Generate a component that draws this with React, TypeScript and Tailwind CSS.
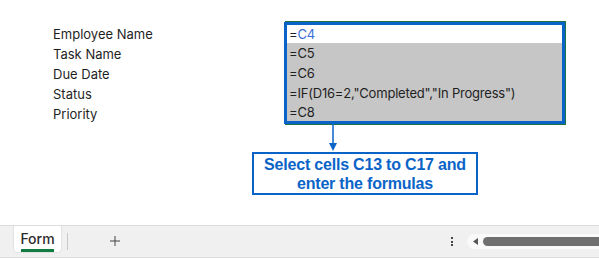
import React from 'react';

const labels = ["Employee Name", "Task Name", "Due Date", "Status", "Priority"];
const formulas = ["=C5", "=C6", '=IF(D16=2,"Completed","In Progress")', "=C8"];

const App = () => {
    return (
        <div className="w-[599px] h-[259px] bg-white flex flex-col overflow-hidden text-[#1f1f1f]"
             style={{fontFamily: "Inter, 'Liberation Sans', sans-serif"}}>
            {/*sheet area*/}
            <div className="h-[225px] flex flex-col">
                <div className="flex">
                    <div className="w-[284px] pl-[53px] pt-[24px] text-[13px]">
                        {labels.map((label) => (
                            <div key={label} className="h-[20px] leading-[20px]">{label}</div>
                        ))}
                    </div>
                    <div className="mt-[22px] w-[281px] border-[3px] border-[#0a64c8] shadow-[1px_-1px_0_#217346,1px_1px_0_#217346] text-[13px] tracking-[-0.2px]">
                        <div className="h-[18px] leading-[18px] bg-white pl-[2px]">
                            =<span className="text-[#3a6fd6]">C4</span>
                        </div>
                        {formulas.map((f, index) => (
                            <div key={index}
                                 className={`${index === 3 ? "h-[18px] leading-[18px]" : "h-[20px] leading-[20px]"} bg-[#c6c6c6] pl-[2px]`}>
                                {f}
                            </div>
                        ))}
                    </div>
                </div>
                {/*arrow*/}
                <svg width="10" height="28" className="ml-[328px]" viewBox="0 0 10 28">
                    <line x1="5" y1="0" x2="5" y2="21" stroke="#0a64c8" strokeWidth="1.5"/>
                    <path d="M1 19 L9 19 L5 27 Z" fill="#0a64c8"/>
                </svg>
                {/*callout*/}
                <div className="ml-[252px] w-[226px] h-[43px] border-2 border-[#0a64c8] flex flex-col items-center justify-center text-[#0a64c8] font-bold text-[16px] leading-[19px] tracking-[-0.2px]"
                     style={{fontFamily: "'Liberation Sans', Arial, sans-serif"}}>
                    <div>Select cells C13 to C17 and</div>
                    <div>enter the formulas</div>
                </div>
            </div>
            {/*sheet tabs bar*/}
            <div className="h-[33px] bg-[#f0f0f0] border-t border-b border-[#dcdcdc] flex items-start relative">
                <div className="ml-[13px] w-[49px] h-[27px] bg-white rounded-b-[5px] border-x border-b border-[#e2e2e2] flex flex-col items-center pt-[4px]">
                    <span className="text-[14px] leading-[18px] font-medium text-[#2b2b2b]">Form</span>
                    <div className="w-[33px] h-[2.5px] bg-[#107c41] mt-[1px]"/>
                </div>
                <div className="ml-[5px] mt-[7px] w-px h-[17px] bg-[#c8c8c8]"/>
                <svg className="ml-[42px] mt-[10px]" width="10" height="10" viewBox="0 0 10 10">
                    <path d="M5 0 V10 M0 5 H10" stroke="#444" strokeWidth="1"/>
                </svg>
                <div className="ml-auto flex items-center mt-[8px]">
                    <div className="flex flex-col gap-[1.5px] mr-[14px]">
                        <div className="w-[2px] h-[2px] bg-[#444]"/>
                        <div className="w-[2px] h-[2px] bg-[#444]"/>
                        <div className="w-[2px] h-[2px] bg-[#444]"/>
                    </div>
                    <div className="w-[132px] h-[15px] bg-[#f9f9f9] rounded-l-full flex items-center pl-[6px]">
                        <svg width="5" height="7" viewBox="0 0 5 7">
                            <path d="M5 0 L0 3.5 L5 7 Z" fill="#555"/>
                        </svg>
                        <div className="ml-[5px] flex-1 h-[9px] bg-[#6f6f6f] rounded-l-full"/>
                    </div>
                </div>
            </div>
        </div>
    );
};

export default App;
